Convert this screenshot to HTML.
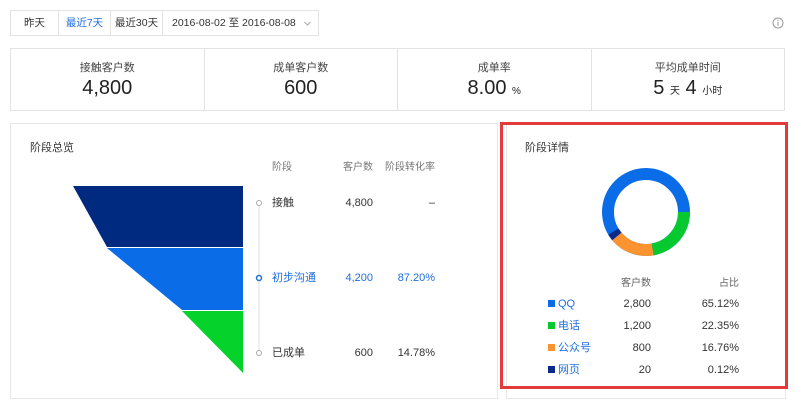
<!DOCTYPE html><html><head><meta charset="utf-8"><style>
*{margin:0;padding:0;box-sizing:border-box}
body{width:797px;height:405px;background:#fff;font-family:"Liberation Sans","Noto Sans CJK SC",sans-serif;color:#333;position:relative;overflow:hidden;font-size:11px;line-height:14px}
.a{position:absolute;white-space:nowrap}
.btns{left:10px;top:10px;height:26px;border:1px solid #e3e3e3;display:flex;font-size:10.5px}
.btns div{border-right:1px solid #e3e3e3;line-height:24px;text-align:center;white-space:nowrap}
.cards{left:10px;top:48px;width:775px;height:63px;border:1px solid #e3e3e3;display:flex}
.cards>div{flex:1;border-right:1px solid #e3e3e3;text-align:center}
.cards>div:last-child{border-right:0}
.cl{font-size:11px;color:#444;margin-top:12px;line-height:14px}
.cv{font-size:20px;color:#222;margin-top:2px;line-height:22px}
.cv small{font-size:10px}
.panel{border:1px solid #e6e6e6}
.r{text-align:right}
</style></head><body>
<div class="a btns"><div style="width:48px">昨天</div><div style="width:52px;color:#1f6fe0">最近7天</div><div style="width:52px">最近30天</div><div style="width:155px;border-right:0;text-align:left;padding-left:9px;position:relative">2016-08-02 至 2016-08-08<svg style="position:absolute;left:141px;top:10px" width="7" height="5"><path d="M0.5 1 L3.5 4 L6.5 1" fill="none" stroke="#aaa"/></svg></div></div>
<svg class="a" style="left:772px;top:17px" width="12" height="12"><circle cx="6" cy="6" r="5" fill="none" stroke="#999"/><line x1="6" y1="5" x2="6" y2="9" stroke="#999"/><circle cx="6" cy="3.4" r=".7" fill="#999"/></svg>
<div class="a cards">
<div><div class="cl">接触客户数</div><div class="cv">4,800</div></div>
<div><div class="cl">成单客户数</div><div class="cv">600</div></div>
<div><div class="cl">成单率</div><div class="cv">8.00 <small>%</small></div></div>
<div><div class="cl">平均成单时间</div><div class="cv">5 <small>天</small> 4 <small>小时</small></div></div>
</div>
<div class="a panel" style="left:10px;top:123px;width:488px;height:276px"></div>
<div class="a" style="left:30px;top:141px;font-size:11px">阶段总览</div>
<svg class="a" style="left:0;top:0" width="500" height="400">
<polygon points="73,186 243,186 243,247 107,247" fill="#002a80"/>
<polygon points="107,248 243,248 243,310 182,310" fill="#0a6ce6"/>
<polygon points="182,311 243,311 243,373" fill="#05d32b"/>
<line x1="259" y1="203" x2="259" y2="353" stroke="#ddd"/>
<circle cx="259" cy="203" r="2.5" fill="#fff" stroke="#aaa"/>
<circle cx="259" cy="278" r="2.5" fill="#fff" stroke="#1f6fe0" stroke-width="1.5"/>
<circle cx="259" cy="353" r="2.5" fill="#fff" stroke="#aaa"/>
</svg>
<div class="a" style="left:272px;top:161px;color:#777;font-size:10px">阶段</div>
<div class="a r" style="left:320px;width:53px;top:161px;color:#777;font-size:10px">客户数</div>
<div class="a r" style="left:380px;width:55px;top:161px;color:#777;font-size:10px">阶段转化率</div>
<div class="a" style="left:272px;top:196px">接触</div><div class="a r" style="left:320px;width:53px;top:196px">4,800</div><div class="a r" style="left:380px;width:55px;top:196px">–</div>
<div class="a" style="left:272px;top:271px;color:#1f6fe0">初步沟通</div><div class="a r" style="left:320px;width:53px;top:271px;color:#1f6fe0">4,200</div><div class="a r" style="left:380px;width:55px;top:271px;color:#1f6fe0">87.20%</div>
<div class="a" style="left:272px;top:346px">已成单</div><div class="a r" style="left:320px;width:53px;top:346px">600</div><div class="a r" style="left:380px;width:55px;top:346px">14.78%</div>
<div class="a panel" style="left:506px;top:123px;width:280px;height:276px"></div>
<div class="a" style="left:500px;top:122px;width:288px;height:267px;border:3px solid #e23b3b"></div>
<div class="a" style="left:525px;top:141px">阶段详情</div>
<svg class="a" style="left:601px;top:167px" width="90" height="90" viewBox="-45 -45 90 90">
<g fill="none" stroke-width="12">
<circle r="38" stroke="#0a6ce6"/>
<circle r="38" stroke="#05c92e" stroke-dasharray="53 300" transform="rotate(0)"/>
<circle r="38" stroke="#fb9430" stroke-dasharray="40 300" transform="rotate(80)"/>
<circle r="38" stroke="#0b2a8c" stroke-dasharray="6 300" transform="rotate(140)"/>
</g></svg>
<div class="a r" style="left:600px;width:51px;top:277px;color:#666;font-size:10px">客户数</div>
<div class="a r" style="left:690px;width:49px;top:277px;color:#666;font-size:10px">占比</div>
<div class="a" style="left:548px;top:300px;width:7px;height:7px;background:#0a6ce6"></div><div class="a" style="left:558px;top:297px;color:#1f6fe0">QQ</div><div class="a r" style="left:600px;width:51px;top:297px">2,800</div><div class="a r" style="left:680px;width:59px;top:297px">65.12%</div>
<div class="a" style="left:548px;top:322px;width:7px;height:7px;background:#05c92e"></div><div class="a" style="left:558px;top:319px;color:#1f6fe0">电话</div><div class="a r" style="left:600px;width:51px;top:319px">1,200</div><div class="a r" style="left:680px;width:59px;top:319px">22.35%</div>
<div class="a" style="left:548px;top:344px;width:7px;height:7px;background:#fb9430"></div><div class="a" style="left:558px;top:341px;color:#1f6fe0">公众号</div><div class="a r" style="left:600px;width:51px;top:341px">800</div><div class="a r" style="left:680px;width:59px;top:341px">16.76%</div>
<div class="a" style="left:548px;top:366px;width:7px;height:7px;background:#0b2a8c"></div><div class="a" style="left:558px;top:363px;color:#1f6fe0">网页</div><div class="a r" style="left:600px;width:51px;top:363px">20</div><div class="a r" style="left:680px;width:59px;top:363px">0.12%</div>
</body></html>
